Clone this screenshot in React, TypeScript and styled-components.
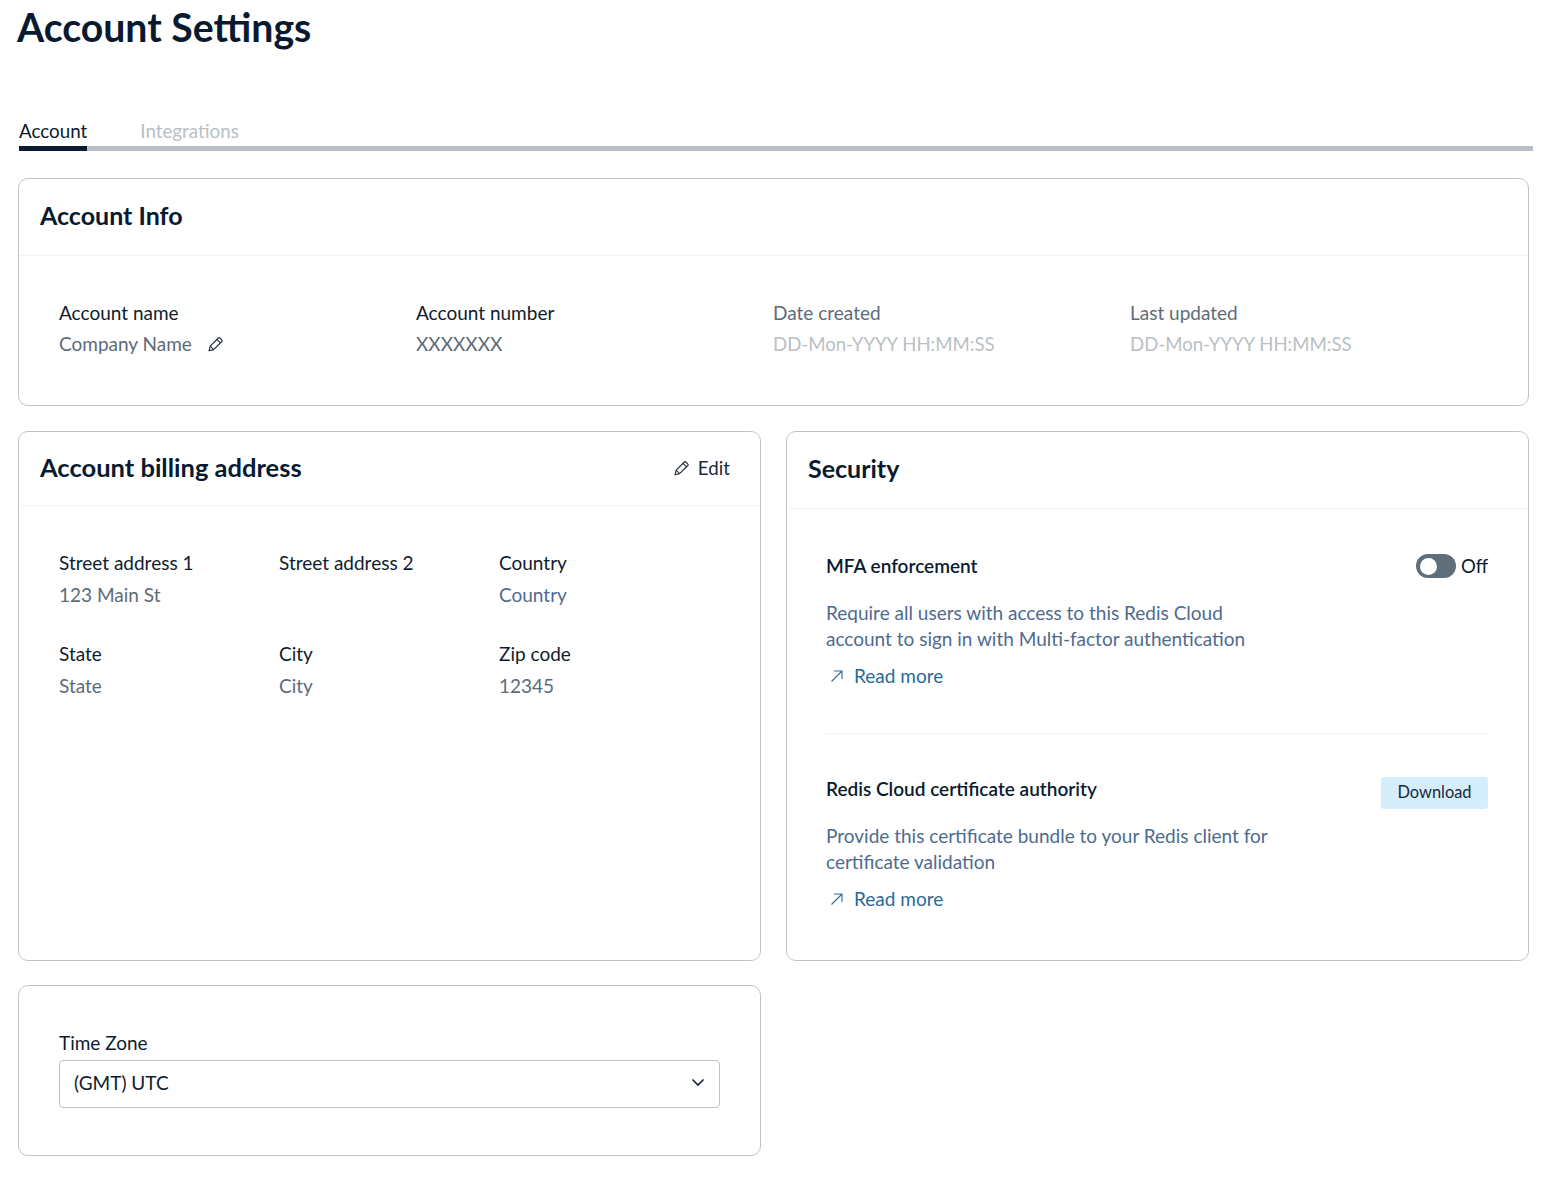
import React from "react";
import styled, { createGlobalStyle } from "styled-components";

const GlobalStyle = createGlobalStyle`
  html, body {
    margin: 0;
    padding: 0;
    background: #fff;
    font-family: "Lato", "Open Sans", sans-serif;
    color: #0b1a33;
  }
  * { box-sizing: border-box; }
`;

const Page = styled.div`
  width: 1554px;
  height: 1182px;
  padding: 0 21px 0 18px;
  overflow: hidden;
`;

const PageTitle = styled.h1`
  margin: 0;
  height: 100px;
  padding: 5px 0 0;
  margin-left: -1px;
  font-size: 39.2px;
  line-height: 44px;
  font-weight: 700;
  color: #091a30;
`;

const TabBar = styled.div`
  display: flex;
  gap: 53px;
  height: 51px;
  margin-left: 1px;
  padding-top: 20px;
  border-bottom: 5px solid #b9c0c5;
`;

const Tab = styled.div<{ $active?: boolean }>`
  position: relative;
  font-size: 18.8px;
  line-height: 22px;
  color: ${({ $active }) => ($active ? "#0b1a2c" : "#b9c0c5")};

  ${({ $active }) =>
    $active &&
    `&::after {
      content: "";
      position: absolute;
      left: 0;
      right: 0;
      bottom: -5px;
      height: 5px;
      background: #0b1a2c;
    }`}
`;

const Card = styled.section<{ $height: number; $width?: number }>`
  width: ${({ $width }) => ($width ? `${$width}px` : "100%")};
  height: ${({ $height }) => $height}px;
  border: 1px solid #bcc3ca;
  border-radius: 10px;
  background: #fff;
`;

const CardsStack = styled.div`
  display: flex;
  flex-direction: column;
  width: 1511px;
  margin-top: 27px;
`;

const TwoColumns = styled.div`
  display: grid;
  grid-template-columns: 743px 743px;
  gap: 25px;
  margin-top: 25px;
`;

const TimeZoneCardWrap = styled.div`
  margin-top: 24px;
`;

const CardHeader = styled.header<{ $height: number }>`
  display: flex;
  align-items: center;
  justify-content: space-between;
  height: ${({ $height }) => $height}px;
  padding: 0 30px 4px 21px;
  border-bottom: 1px solid #f1f3f4;
`;

const CardTitle = styled.h2<{ $size?: number }>`
  margin: 0;
  font-size: ${({ $size }) => $size ?? 25}px;
  line-height: 30px;
  font-weight: 700;
  color: #091a30;
`;

const EditButton = styled.button`
  display: flex;
  align-items: center;
  gap: 8px;
  margin-top: 2px;
  padding: 0;
  border: 0;
  background: none;
  font: inherit;
  font-size: 18.8px;
  color: #1c2a3a;
`;

const InfoGrid = styled.div`
  display: grid;
  grid-template-columns: repeat(4, 357px);
  padding: 46px 0 0 40px;
`;

const AddressGrid = styled.div`
  display: grid;
  grid-template-columns: repeat(3, 220px);
  row-gap: 27px;
  padding: 46px 0 0 40px;
`;

const Field = styled.div<{ $gap?: number }>`
  display: flex;
  flex-direction: column;
  gap: ${({ $gap }) => $gap ?? 9}px;
  min-height: 64px;
`;

const FieldLabel = styled.div<{ $muted?: boolean }>`
  font-size: 19px;
  line-height: 22px;
  color: ${({ $muted }) => ($muted ? "#5d6b78" : "#0f1c2e")};
`;

const FieldValue = styled.div<{ $tone?: "faint" | "blue" }>`
  display: flex;
  align-items: center;
  gap: 16px;
  font-size: ${({ $tone }) => ($tone === "faint" ? 18.6 : 19)}px;
  line-height: 22px;
  color: ${({ $tone }) =>
    $tone === "faint" ? "#b9c0c5" : $tone === "blue" ? "#4f6a8f" : "#5d6b78"};
`;

const SecurityBody = styled.div`
  padding: 45px 40px 0 39px;
`;

const SecurityBlock = styled.div<{ $divided?: boolean }>`
  ${({ $divided }) =>
    $divided &&
    `padding-bottom: 44px;
     margin-bottom: 43px;
     border-bottom: 1px solid #f1f3f4;`}
`;

const BlockTop = styled.div`
  display: flex;
  align-items: flex-start;
  justify-content: space-between;
  height: 46px;
`;

const BlockTitle = styled.h3`
  margin: 0;
  font-size: 19px;
  line-height: 24px;
  font-weight: 600;
  color: #0b1a30;
`;

const ToggleWrap = styled.div`
  display: flex;
  align-items: center;
  gap: 5px;
  height: 24px;
  font-size: 18.5px;
  color: #0b1a30;
`;

const ToggleTrack = styled.span`
  display: flex;
  align-items: center;
  width: 40px;
  height: 24px;
  padding: 3px 4px;
  border-radius: 12px;
  background: #5f6e7b;
`;

const ToggleKnob = styled.span`
  width: 17px;
  height: 17px;
  border-radius: 50%;
  background: #fff;
`;

const Description = styled.p`
  width: 450px;
  margin: 0;
  font-size: 19px;
  line-height: 26px;
  color: #4f6a8f;
`;

const ReadMore = styled.a`
  display: flex;
  align-items: center;
  gap: 10px;
  margin: 11px 0 0 4px;
  font-size: 19px;
  line-height: 26px;
  color: #2a6a98;
`;

const DownloadButton = styled.button`
  width: 107px;
  height: 32px;
  padding: 0 0 3px;
  border: 0;
  border-radius: 3px;
  background: #d6eefc;
  font: inherit;
  font-size: 16.4px;
  color: #14293f;
`;

const TimeZoneBody = styled.div`
  padding: 46px 40px 0;
`;

const SelectLabel = styled.div`
  margin-bottom: 6px;
  font-size: 19px;
  line-height: 22px;
  color: #0f1c2e;
`;

const SelectBox = styled.div`
  display: flex;
  align-items: center;
  justify-content: space-between;
  height: 48px;
  padding: 0 14px 3px;
  border: 1px solid #bcc3ca;
  border-radius: 4px;
  font-size: 19px;
  color: #0f1c2e;
`;

const PencilIcon = ({ size = 16 }: { size?: number }) => (
  <svg width={size} height={size} viewBox="0 0 16 16" fill="none" stroke="#1c2a3a" strokeWidth="1.1" strokeLinejoin="round">
    <path d="M1 14.8l1.2-4.6L10.4 2a1 1 0 0 1 1.4 0l2.1 2.1a1 1 0 0 1 0 1.4L5.6 13.6z" />
    <path d="M9 3.4l3.5 3.5M2.2 10.2l3.4 3.4" />
  </svg>
);

const ArrowIcon = () => (
  <svg width="14" height="14" viewBox="0 0 14 14" fill="none" stroke="#2a6a98" strokeWidth="1.1">
    <path d="M1.5 12.5L12 2M4 2h8v8" />
  </svg>
);

const ChevronIcon = () => (
  <svg width="14" height="9" viewBox="0 0 14 9" fill="none" stroke="#14233a" strokeWidth="1.6">
    <path d="M1.5 1.5L7 7l5.5-5.5" />
  </svg>
);

const addressFields = [
  { label: "Street address 1", value: "123 Main St" },
  { label: "Street address 2", value: "" },
  { label: "Country", value: "Country", tone: "blue" as const },
  { label: "State", value: "State" },
  { label: "City", value: "City" },
  { label: "Zip code", value: "12345" },
];

export default function App() {
  return (
    <Page>
      <GlobalStyle />
      <PageTitle>Account Settings</PageTitle>
      <TabBar>
        <Tab $active>Account</Tab>
        <Tab>Integrations</Tab>
      </TabBar>

      <CardsStack>
        <Card $height={228}>
          <CardHeader $height={77}>
            <CardTitle>Account Info</CardTitle>
          </CardHeader>
          <InfoGrid>
            <Field>
              <FieldLabel>Account name</FieldLabel>
              <FieldValue>
                Company Name <PencilIcon />
              </FieldValue>
            </Field>
            <Field>
              <FieldLabel>Account number</FieldLabel>
              <FieldValue>XXXXXXX</FieldValue>
            </Field>
            <Field>
              <FieldLabel $muted>Date created</FieldLabel>
              <FieldValue $tone="faint">DD-Mon-YYYY HH:MM:SS</FieldValue>
            </Field>
            <Field>
              <FieldLabel $muted>Last updated</FieldLabel>
              <FieldValue $tone="faint">DD-Mon-YYYY HH:MM:SS</FieldValue>
            </Field>
          </InfoGrid>
        </Card>

        <TwoColumns>
          <Card $height={530}>
            <CardHeader $height={74}>
              <CardTitle $size={25.5}>Account billing address</CardTitle>
              <EditButton>
                <PencilIcon />
                Edit
              </EditButton>
            </CardHeader>
            <AddressGrid>
              {addressFields.map((field) => (
                <Field key={field.label} $gap={10}>
                  <FieldLabel>{field.label}</FieldLabel>
                  <FieldValue $tone={field.tone}>{field.value}</FieldValue>
                </Field>
              ))}
            </AddressGrid>
          </Card>

          <Card $height={530}>
            <CardHeader $height={77}>
              <CardTitle>Security</CardTitle>
            </CardHeader>
            <SecurityBody>
              <SecurityBlock $divided>
                <BlockTop>
                  <BlockTitle>MFA enforcement</BlockTitle>
                  <ToggleWrap>
                    <ToggleTrack>
                      <ToggleKnob />
                    </ToggleTrack>
                    Off
                  </ToggleWrap>
                </BlockTop>
                <Description>
                  Require all users with access to this Redis Cloud account to sign in with Multi-factor authentication
                </Description>
                <ReadMore>
                  <ArrowIcon />
                  Read more
                </ReadMore>
              </SecurityBlock>
              <SecurityBlock>
                <BlockTop>
                  <BlockTitle>Redis Cloud certificate authority</BlockTitle>
                  <DownloadButton>Download</DownloadButton>
                </BlockTop>
                <Description>
                  Provide this certificate bundle to your Redis client for certificate validation
                </Description>
                <ReadMore>
                  <ArrowIcon />
                  Read more
                </ReadMore>
              </SecurityBlock>
            </SecurityBody>
          </Card>
        </TwoColumns>

        <TimeZoneCardWrap>
          <Card $height={171} $width={743}>
            <TimeZoneBody>
              <SelectLabel>Time Zone</SelectLabel>
              <SelectBox>
                (GMT) UTC
                <ChevronIcon />
              </SelectBox>
            </TimeZoneBody>
          </Card>
        </TimeZoneCardWrap>
      </CardsStack>
    </Page>
  );
}
